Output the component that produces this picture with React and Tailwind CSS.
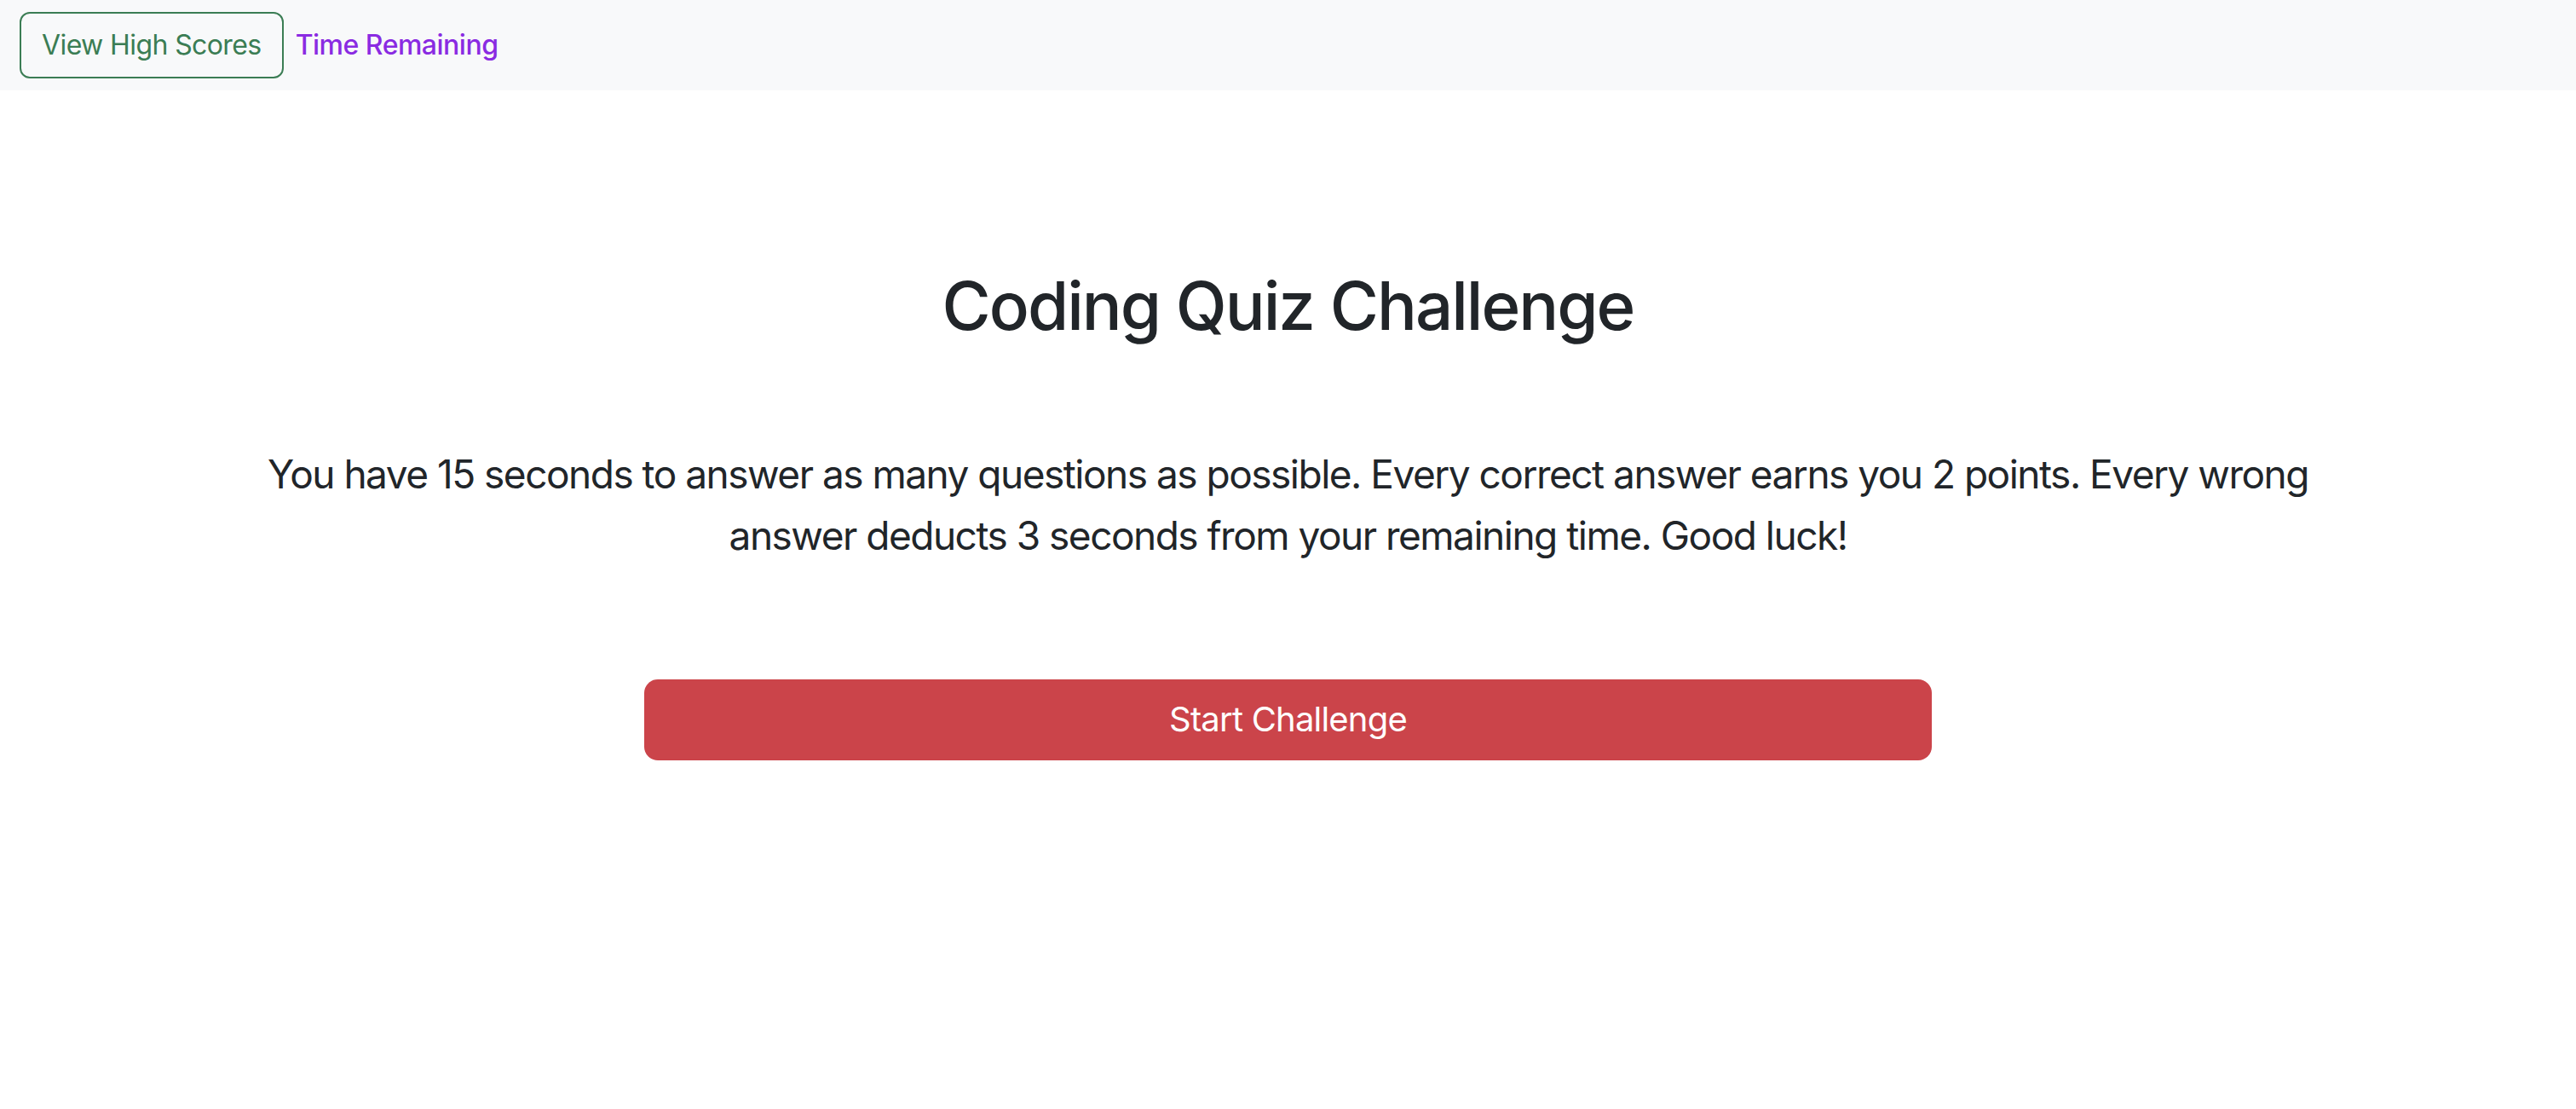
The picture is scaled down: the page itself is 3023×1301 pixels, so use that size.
export default function App() {
  return (
    <div className="min-h-[1301px] bg-white font-['Inter','Liberation_Sans',sans-serif] text-[#212529]">
      <nav className="flex h-[106px] items-center gap-[14px] bg-[#f8f9fa] px-[23px]">
        <button className="h-[78px] rounded-[12px] border-2 border-[#3b7d54] px-[24px] text-[32px] leading-[1.5] tracking-[-0.6px] text-[#3b7d54]">
          View High Scores
        </button>
        <span className="text-[32px] font-medium tracking-[-0.5px] text-[#8a2be2]">Time Remaining</span>
      </nav>
      <main className="flex flex-col items-center">
        <h1 className="mt-[206px] text-[78px] font-medium leading-[1.2] tracking-[-2px]">
          Coding Quiz Challenge
        </h1>
        <p className="mt-[114px] w-[2440px] text-center text-[46px] leading-[72px] tracking-[-1.5px]">
          You have 15 seconds to answer as many questions as possible. Every correct answer earns you 2 points. Every wrong answer deducts 3 seconds from your remaining time. Good luck!
        </p>
        <button className="mt-[133px] h-[95px] w-[1511px] rounded-[16px] bg-[#cb444a] text-[40px] leading-[1] tracking-[-0.8px] text-white">
          Start Challenge
        </button>
      </main>
    </div>
  );
}
